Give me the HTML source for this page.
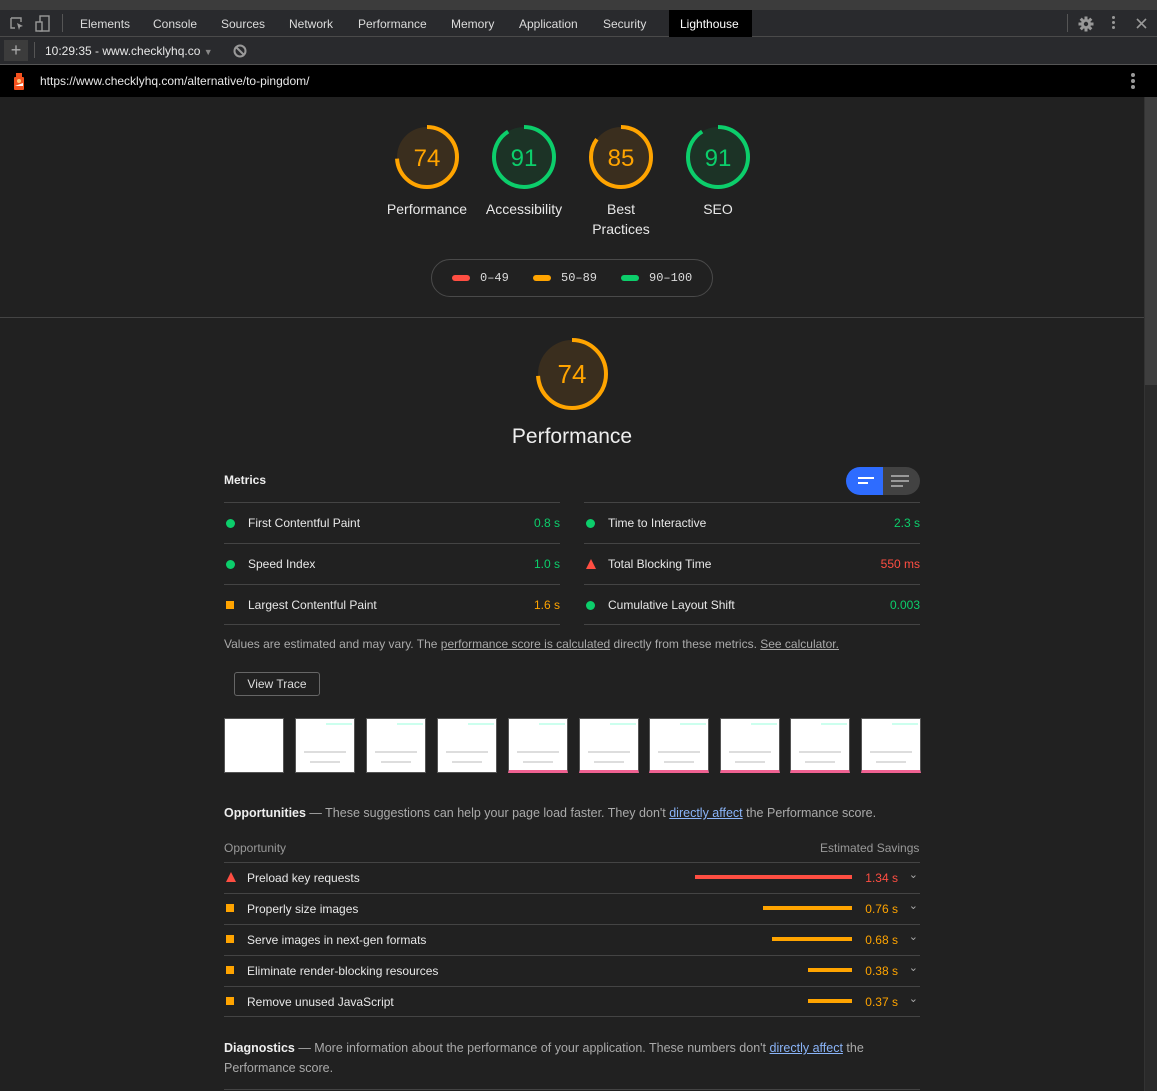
<!DOCTYPE html>
<html><head><meta charset="utf-8"><style>
*{box-sizing:border-box;margin:0;padding:0}
body{width:1157px;height:1091px;overflow:hidden;background:#212121;font-family:"Liberation Sans",sans-serif;color:#e8eaed;position:relative;font-size:12px}
.a{position:absolute}
.tabs{top:0;left:0;width:1157px;height:37px;background:#292a2d;border-top:10px solid #3c3c3c;border-bottom:1px solid #4a4a4a}
.tab{position:absolute;top:7px;font-size:12px;color:#dcdcdc}
.bar2{top:37px;left:0;width:1157px;height:28px;background:#292a2d;border-bottom:1px solid #555}
.url{top:65px;left:0;width:1157px;height:32px;background:#000}
.mono{font-family:"Liberation Mono",monospace}
.lbl{font-size:14px;color:#e8e8e8;text-align:center;width:100px;line-height:20px}
.row{position:absolute;height:41px;border-top:1px solid #444;font-size:12px;color:#e8e8e8}
.row span{position:absolute;top:13px}
.dot{width:9px;height:9px;border-radius:50%;background:#0cce6b;position:absolute;top:16px;left:2px}
.sq{width:8px;height:8px;background:#ffa400;position:absolute}
.tri{width:0;height:0;border-left:5px solid transparent;border-right:5px solid transparent;border-bottom:10px solid #ff4e42;position:absolute}
.frame{position:absolute;top:718px;width:60px;height:55px;background:#fff;border:1px solid #555}
.frame i{position:absolute;background:#ddd;height:2px}
.orow{position:absolute;left:224px;width:696px;height:31px;border-top:1px solid #444;font-size:12px;color:#e8e8e8}
.orow .t{position:absolute;left:23px;top:8px}
.orow .bar{position:absolute;top:12px;height:4px;background:#ffa400}
.orow .v{position:absolute;right:22px;top:8px;color:#ffa400}
.orow .c{position:absolute;right:2px;top:5px;color:#aaa;font-size:11px}
u{color:#aaa}
</style></head><body>
<div class="a tabs">
<svg class="a" style="left:9px;top:6px" width="16" height="16"><path d="M2 2h10v4M2 2v10h4" stroke="#999" fill="none" stroke-width="1.4"/><path d="M8 7l6 3-3 1-1 3z" fill="#999"/></svg>
<svg class="a" style="left:35px;top:5px" width="16" height="18"><rect x="5" y="1" width="9" height="15" stroke="#999" fill="none" stroke-width="1.4"/><rect x="1" y="7" width="6" height="9" stroke="#999" fill="#292a2d" stroke-width="1.4"/></svg>
<div class="a" style="left:62px;top:4px;width:1px;height:18px;background:#555"></div>
<div class="tab" style="left:80px">Elements</div><div class="tab" style="left:153px">Console</div><div class="tab" style="left:221px">Sources</div><div class="tab" style="left:289px">Network</div><div class="tab" style="left:358px">Performance</div><div class="tab" style="left:451px">Memory</div><div class="tab" style="left:519px">Application</div><div class="tab" style="left:603px">Security</div>
<div class="a" style="left:669px;top:0;width:83px;height:27px;background:#000"></div><div class="tab" style="left:680px;color:#fff">Lighthouse</div>
<div class="a" style="left:1067px;top:4px;width:1px;height:18px;background:#555"></div>
<svg class="a" style="left:1078px;top:6px" width="16" height="16"><g fill="#999"><circle cx="8" cy="8" r="5"/><rect x="6.5" y="0.5" width="3" height="15"/><rect x="0.5" y="6.5" width="15" height="3"/><rect x="6.5" y="0.5" width="3" height="15" transform="rotate(45 8 8)"/><rect x="6.5" y="0.5" width="3" height="15" transform="rotate(-45 8 8)"/></g><circle cx="8" cy="8" r="2.2" fill="#292a2d"/></svg>
<div class="a" style="left:1112px;top:6px;width:3px"><div style="width:3px;height:3px;border-radius:50%;background:#999;margin-bottom:2px"></div><div style="width:3px;height:3px;border-radius:50%;background:#999;margin-bottom:2px"></div><div style="width:3px;height:3px;border-radius:50%;background:#999"></div></div>
<svg class="a" style="left:1136px;top:8px" width="11" height="11"><path d="M1 1l9 9M10 1l-9 9" stroke="#999" stroke-width="1.6"/></svg>
</div>
<div class="a bar2">
<div class="a" style="left:4px;top:3px;width:24px;height:21px;background:#3c3c3c;color:#aaa;font-size:18px;text-align:center;line-height:20px">+</div>
<div class="a" style="left:34px;top:5px;width:1px;height:16px;background:#555"></div>
<div class="a" style="left:45px;top:7px;font-size:12px;color:#e8e8e8">10:29:35 - www.checklyhq.co <span style="color:#888;font-size:9px">▼</span></div>
<svg class="a" style="left:233px;top:7px" width="14" height="14"><circle cx="7" cy="7" r="5.5" stroke="#999" stroke-width="2" fill="none"/><path d="M3 3l8 8" stroke="#999" stroke-width="2"/></svg>
</div>
<div class="a url">
<svg class="a" style="left:12px;top:7px" width="14" height="19"><rect x="2" y="5" width="10" height="13" rx="1" fill="#f4511e"/><rect x="4" y="1" width="6" height="5" fill="#f4511e"/><circle cx="7" cy="9" r="2" fill="#ffcc80"/><path d="M3 14l8-3v3z" fill="#fff"/></svg>
<div class="a" style="left:40px;top:9px;font-size:12px;color:#e8e8e8">https://www.checklyhq.com/alternative/to-pingdom/</div>
<div class="a" style="left:1131px;top:8px;width:4px"><div style="width:4px;height:4px;border-radius:50%;background:#999;margin-bottom:2px"></div><div style="width:4px;height:4px;border-radius:50%;background:#999;margin-bottom:2px"></div><div style="width:4px;height:4px;border-radius:50%;background:#999"></div></div>
</div>
<div class="a" style="left:1144px;top:97px;width:13px;height:994px;background:#2a2a2a;border-left:1px solid #333"></div>
<div class="a" style="left:1145px;top:97px;width:12px;height:288px;background:#3e3e3e"></div>

<svg class="a" style="left:380px;top:110px" width="400" height="100">
<g transform="translate(47,47)"><circle r="30" fill="#3a2e1e"/><circle r="30" fill="none" stroke="#ffa400" stroke-width="4" stroke-dasharray="139.5 200" transform="rotate(-90)"/><text y="9" text-anchor="middle" font-size="24" fill="#ffa400" font-family="Liberation Sans">74</text></g>
<g transform="translate(144,47)"><circle r="30" fill="#1c3326"/><circle r="30" fill="none" stroke="#0cce6b" stroke-width="4" stroke-dasharray="171.5 200" transform="rotate(-90)"/><text y="9" text-anchor="middle" font-size="24" fill="#0cce6b" font-family="Liberation Sans">91</text></g>
<g transform="translate(241,47)"><circle r="30" fill="#3a2e1e"/><circle r="30" fill="none" stroke="#ffa400" stroke-width="4" stroke-dasharray="160.2 200" transform="rotate(-90)"/><text y="9" text-anchor="middle" font-size="24" fill="#ffa400" font-family="Liberation Sans">85</text></g>
<g transform="translate(338,47)"><circle r="30" fill="#1c3326"/><circle r="30" fill="none" stroke="#0cce6b" stroke-width="4" stroke-dasharray="171.5 200" transform="rotate(-90)"/><text y="9" text-anchor="middle" font-size="24" fill="#0cce6b" font-family="Liberation Sans">91</text></g>
</svg>
<div class="a lbl" style="left:377px;top:199px">Performance</div>
<div class="a lbl" style="left:474px;top:199px">Accessibility</div>
<div class="a lbl" style="left:571px;top:199px">Best<br>Practices</div>
<div class="a lbl" style="left:668px;top:199px">SEO</div>

<div class="a" style="left:431px;top:259px;width:282px;height:38px;border:1px solid #4a4a4a;border-radius:19px"></div>
<div class="a" style="left:452px;top:275px;width:18px;height:6px;border-radius:3px;background:#ff4e42"></div>
<div class="a mono" style="left:480px;top:271px;font-size:12px;color:#ddd">0–49</div>
<div class="a" style="left:533px;top:275px;width:18px;height:6px;border-radius:3px;background:#ffa400"></div>
<div class="a mono" style="left:561px;top:271px;font-size:12px;color:#ddd">50–89</div>
<div class="a" style="left:621px;top:275px;width:18px;height:6px;border-radius:3px;background:#0cce6b"></div>
<div class="a mono" style="left:649px;top:271px;font-size:12px;color:#ddd">90–100</div>

<div class="a" style="left:0;top:317px;width:1144px;height:1px;background:#444"></div>

<svg class="a" style="left:532px;top:334px" width="80" height="80"><g transform="translate(40,40)"><circle r="34" fill="#3a2e1e"/><circle r="34" fill="none" stroke="#ffa400" stroke-width="4" stroke-dasharray="158 220" transform="rotate(-90)"/><text y="9" text-anchor="middle" font-size="26" fill="#ffa400" font-family="Liberation Sans">74</text></g></svg>
<div class="a" style="left:472px;top:425px;width:200px;text-align:center;font-size:21px;color:#eee">Performance</div>

<div class="a" style="left:224px;top:473px;font-size:12px;font-weight:bold;color:#eee">Metrics</div>
<div class="a" style="left:846px;top:467px;width:37px;height:28px;background:#2e6cff;border-radius:14px 0 0 14px"></div>
<div class="a" style="left:883px;top:467px;width:37px;height:28px;background:#424242;border-radius:0 14px 14px 0"></div>
<div class="a" style="left:858px;top:477px;width:16px;height:2px;background:#fff"></div><div class="a" style="left:858px;top:482px;width:10px;height:2px;background:#fff"></div>
<div class="a" style="left:891px;top:475px;width:18px;height:2px;background:#999"></div><div class="a" style="left:891px;top:480px;width:18px;height:2px;background:#999"></div><div class="a" style="left:891px;top:485px;width:12px;height:2px;background:#999"></div>

<div class="row" style="left:224px;top:502px;width:336px"><div class="dot"></div><span style="left:24px">First Contentful Paint</span><span style="right:0;color:#0cce6b">0.8 s</span></div>
<div class="row" style="left:224px;top:543px;width:336px"><div class="dot"></div><span style="left:24px">Speed Index</span><span style="right:0;color:#0cce6b">1.0 s</span></div>
<div class="row" style="left:224px;top:584px;width:336px;border-bottom:1px solid #444"><div class="sq" style="left:2px;top:16px"></div><span style="left:24px">Largest Contentful Paint</span><span style="right:0;color:#ffa400">1.6 s</span></div>
<div class="row" style="left:584px;top:502px;width:336px"><div class="dot"></div><span style="left:24px">Time to Interactive</span><span style="right:0;color:#0cce6b">2.3 s</span></div>
<div class="row" style="left:584px;top:543px;width:336px"><div class="tri" style="left:2px;top:15px"></div><span style="left:24px">Total Blocking Time</span><span style="right:0;color:#ff4e42">550 ms</span></div>
<div class="row" style="left:584px;top:584px;width:336px;border-bottom:1px solid #444"><div class="dot"></div><span style="left:24px">Cumulative Layout Shift</span><span style="right:0;color:#0cce6b">0.003</span></div>

<div class="a" style="left:224px;top:637px;font-size:12px;color:#aaa">Values are estimated and may vary. The <u>performance score is calculated</u> directly from these metrics. <u>See calculator.</u></div>
<div class="a" style="left:234px;top:672px;width:86px;height:24px;border:1px solid #666;border-radius:3px;font-size:12px;color:#ddd;text-align:center;line-height:22px">View Trace</div>

<div class="frame" style="left:224px"></div>
<div class="frame" style="left:295px"><i style="left:8px;top:32px;width:42px"></i><i style="left:14px;top:42px;width:30px"></i><i style="left:30px;top:4px;width:26px;background:#cfe"></i></div>
<div class="frame" style="left:366px"><i style="left:8px;top:32px;width:42px"></i><i style="left:14px;top:42px;width:30px"></i><i style="left:30px;top:4px;width:26px;background:#cfe"></i></div>
<div class="frame" style="left:437px"><i style="left:8px;top:32px;width:42px"></i><i style="left:14px;top:42px;width:30px"></i><i style="left:30px;top:4px;width:26px;background:#cfe"></i></div>
<div class="frame" style="left:508px;border-bottom:3px solid #f06292"><i style="left:8px;top:32px;width:42px"></i><i style="left:14px;top:42px;width:30px"></i><i style="left:30px;top:4px;width:26px;background:#cfe"></i></div>
<div class="frame" style="left:579px;border-bottom:3px solid #f06292"><i style="left:8px;top:32px;width:42px"></i><i style="left:14px;top:42px;width:30px"></i><i style="left:30px;top:4px;width:26px;background:#cfe"></i></div>
<div class="frame" style="left:649px;border-bottom:3px solid #f06292"><i style="left:8px;top:32px;width:42px"></i><i style="left:14px;top:42px;width:30px"></i><i style="left:30px;top:4px;width:26px;background:#cfe"></i></div>
<div class="frame" style="left:720px;border-bottom:3px solid #f06292"><i style="left:8px;top:32px;width:42px"></i><i style="left:14px;top:42px;width:30px"></i><i style="left:30px;top:4px;width:26px;background:#cfe"></i></div>
<div class="frame" style="left:790px;border-bottom:3px solid #f06292"><i style="left:8px;top:32px;width:42px"></i><i style="left:14px;top:42px;width:30px"></i><i style="left:30px;top:4px;width:26px;background:#cfe"></i></div>
<div class="frame" style="left:861px;border-bottom:3px solid #f06292"><i style="left:8px;top:32px;width:42px"></i><i style="left:14px;top:42px;width:30px"></i><i style="left:30px;top:4px;width:26px;background:#cfe"></i></div>

<div class="a" style="left:224px;top:806px;font-size:12.5px;color:#aaa;white-space:nowrap"><b style="color:#eee">Opportunities</b> — These suggestions can help your page load faster. They don't <u style="color:#8ab4f8">directly affect</u> the Performance score.</div>
<div class="a" style="left:224px;top:841px;font-size:12px;color:#999">Opportunity</div>
<div class="a" style="left:820px;top:841px;font-size:12px;color:#999">Estimated Savings</div>
<div class="orow" style="top:862px"><div class="tri" style="left:2px;top:9px"></div><span class="t">Preload key requests</span><div class="bar" style="left:471px;width:157px;background:#ff4e42"></div><span class="v" style="color:#ff4e42">1.34 s</span><span class="c">⌄</span></div>
<div class="orow" style="top:893px"><div class="sq" style="left:2px;top:10px"></div><span class="t">Properly size images</span><div class="bar" style="left:539px;width:89px"></div><span class="v">0.76 s</span><span class="c">⌄</span></div>
<div class="orow" style="top:924px"><div class="sq" style="left:2px;top:10px"></div><span class="t">Serve images in next-gen formats</span><div class="bar" style="left:548px;width:80px"></div><span class="v">0.68 s</span><span class="c">⌄</span></div>
<div class="orow" style="top:955px"><div class="sq" style="left:2px;top:10px"></div><span class="t">Eliminate render-blocking resources</span><div class="bar" style="left:584px;width:44px"></div><span class="v">0.38 s</span><span class="c">⌄</span></div>
<div class="orow" style="top:986px;border-bottom:1px solid #444"><div class="sq" style="left:2px;top:10px"></div><span class="t">Remove unused JavaScript</span><div class="bar" style="left:584px;width:44px"></div><span class="v">0.37 s</span><span class="c">⌄</span></div>

<div class="a" style="left:224px;top:1038px;width:680px;font-size:12.5px;color:#aaa;line-height:20px"><b style="color:#eee">Diagnostics</b> — More information about the performance of your application. These numbers don't <u style="color:#8ab4f8">directly affect</u> the Performance score.</div>
<div class="a" style="left:224px;top:1089px;width:696px;height:1px;background:#444"></div>
</body></html>
